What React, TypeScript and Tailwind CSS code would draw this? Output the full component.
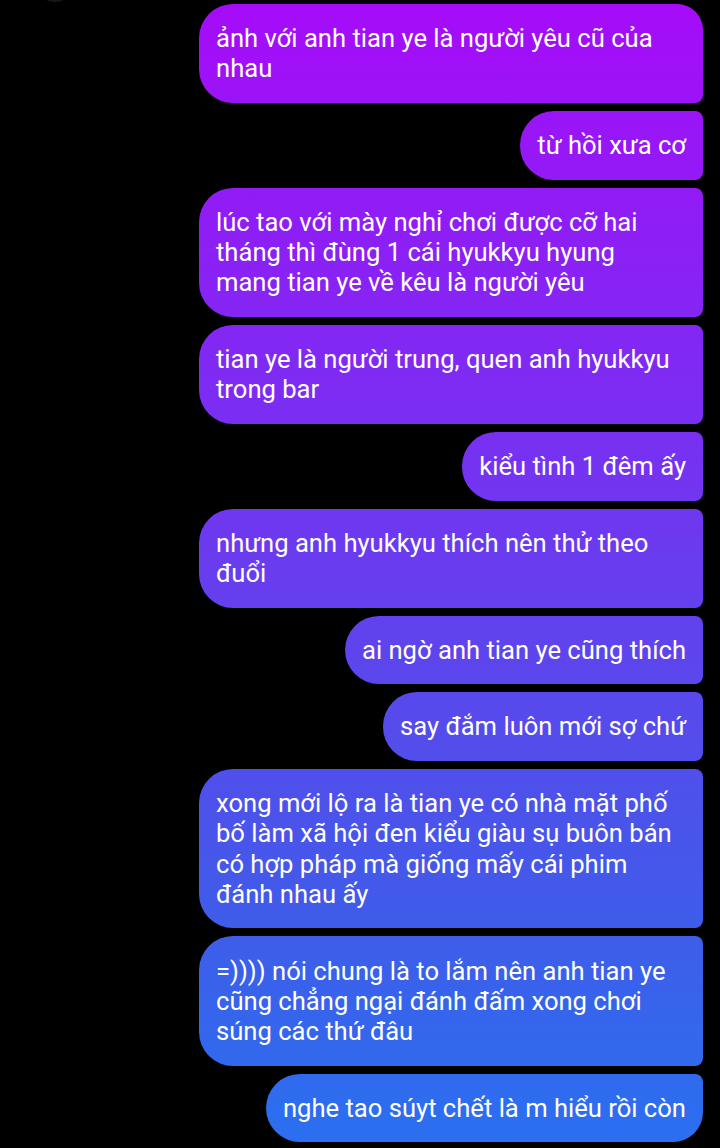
import React from 'react';

type Msg = { lines: string[] };

const messages: Msg[] = [
    { lines: ['ảnh với anh tian ye là người yêu cũ của', 'nhau'] },
    { lines: ['từ hồi xưa cơ'] },
    { lines: ['lúc tao với mày nghỉ chơi được cỡ hai', 'tháng thì đùng 1 cái hyukkyu hyung', 'mang tian ye về kêu là người yêu'] },
    { lines: ['tian ye là người trung, quen anh hyukkyu', 'trong bar'] },
    { lines: ['kiểu tình 1 đêm ấy'] },
    { lines: ['nhưng anh hyukkyu thích nên thử theo', 'đuổi'] },
    { lines: ['ai ngờ anh tian ye cũng thích'] },
    { lines: ['say đắm luôn mới sợ chứ'] },
    { lines: ['xong mới lộ ra là tian ye có nhà mặt phố', 'bố làm xã hội đen kiểu giàu sụ buôn bán', 'có hợp pháp mà giống mấy cái phim', 'đánh nhau ấy'] },
    { lines: ['=)))) nói chung là to lắm nên anh tian ye', 'cũng chẳng ngại đánh đấm xong chơi', 'súng các thứ đâu'] },
    { lines: ['nghe tao súyt chết là m hiểu rồi còn'] },
];

const Bubble: React.FC<{ msg: Msg; first: boolean; last: boolean }> = ({ msg, first, last }) => {
    const multi = msg.lines.length > 1;
    return (
        <div
            className={[
                'bg-fixed bg-[linear-gradient(180deg,#a60bf9_0%,#8e1ef5_20%,#7334f1_42%,#574aec_62%,#3f5ce9_80%,#2a70f0_100%)]',
                'px-[17px] py-[19.2px] text-white text-[25.6px] leading-[30.3px]',
                'rounded-l-[34px]',
                first ? 'rounded-tr-[26px]' : 'rounded-tr-[8px]',
                last ? 'rounded-br-[30px]' : 'rounded-br-[8px]',
                multi ? 'w-[504px]' : 'w-fit',
            ].join(' ')}
            style={{ fontFamily: 'Roboto, "Noto Sans", sans-serif' }}
        >
            {msg.lines.map((l, i) => (
                <div key={i} className="whitespace-nowrap">{l}</div>
            ))}
        </div>
    );
};

const App: React.FC = () => {
    return (
        <div className="w-[720px] h-[1148px] bg-black overflow-hidden relative">
            <div className="absolute left-[38px] top-[-30px] w-[34px] h-[32px] rounded-full bg-[#161616]"></div>
            <div className="flex flex-col items-end gap-2 pt-1 pr-[17px]">
                {messages.map((m, i) => (
                    <Bubble key={i} msg={m} first={i === 0} last={i === messages.length - 1} />
                ))}
            </div>
        </div>
    );
};

export default App;
